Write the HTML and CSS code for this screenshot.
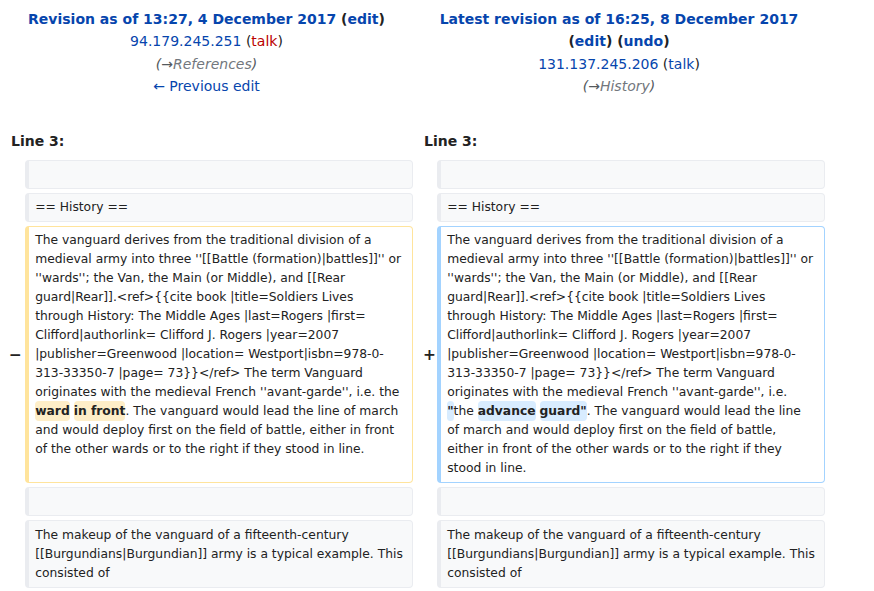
FILE: index.html
```html
<!DOCTYPE html>
<html lang="en">
<head>
<meta charset="utf-8">
<title>Diff</title>
<link rel="stylesheet" href="styles.css">
</head>
<body>
<div class="diff">
  <div class="hdr">
    <p class="title"><a href="#">Revision as of 13:27, 4 December 2017</a> <span class="paren">(<a href="#">edit</a>)</span></p>
    <p><a href="#">94.179.245.251</a> (<a href="#" class="new">talk</a>)</p>
    <p class="comment">(→<span class="autocomment">References</span>)</p>
    <p><a href="#">← Previous edit</a></p>
  </div>
  <div class="hdr">
    <p class="title"><a href="#">Latest revision as of 16:25, 8 December 2017</a> <span class="paren nowrap">(<a href="#">edit</a>) (<a href="#">undo</a>)</span></p>
    <p><a href="#">131.137.245.206</a> (<a href="#">talk</a>)</p>
    <p class="comment">(→<span class="autocomment">History</span>)</p>
  </div>

  <div class="lineno">Line 3:</div>
  <div class="lineno">Line 3:</div>

  <div class="mk"></div><div class="cell ctx"><br></div>
  <div class="mk"></div><div class="cell ctx"><br></div>

  <div class="mk"></div><div class="cell ctx">== History ==</div>
  <div class="mk"></div><div class="cell ctx">== History ==</div>

  <div class="mk">−</div><div class="cell del">The vanguard derives from the traditional division of a medieval army into three ''[[Battle (formation)|battles]]'' or ''wards''; the Van, the Main (or Middle), and [[Rear guard|Rear]].&lt;ref&gt;{{cite book |title=Soldiers Lives through History: The Middle Ages |last=Rogers |first= Clifford|authorlink= Clifford J. Rogers |year=2007 |publisher=Greenwood |location= Westport|isbn=978-0-<wbr>313-33350-7 |page= 73}}&lt;/ref&gt; The term Vanguard originates with the medieval French ''avant-garde'', i.e. the <del class="chg">ward</del> <del class="chg">in front</del>. The vanguard would lead the line of march and would deploy first on the field of battle, either in front of the other wards or to the right if they stood in line.</div>
  <div class="mk mk-add">+</div><div class="cell add">The vanguard derives from the traditional division of a medieval army into three ''[[Battle (formation)|battles]]'' or ''wards''; the Van, the Main (or Middle), and [[Rear guard|Rear]].&lt;ref&gt;{{cite book |title=Soldiers Lives through History: The Middle Ages |last=Rogers |first= Clifford|authorlink= Clifford J. Rogers |year=2007 |publisher=Greenwood |location= Westport|isbn=978-0-<wbr>313-33350-7 |page= 73}}&lt;/ref&gt; The term Vanguard originates with the medieval French ''avant-garde'', i.e. <ins class="chg">"</ins>the <ins class="chg">advance</ins> <ins class="chg">guard"</ins>. The vanguard would lead the line of march and would deploy first on the field of battle, either in front of the other wards or to the right if they stood in line.</div>

  <div class="mk"></div><div class="cell ctx"><br></div>
  <div class="mk"></div><div class="cell ctx"><br></div>

  <div class="mk"></div><div class="cell ctx">The makeup of the vanguard of a fifteenth-century [[Burgundians|Burgundian]] army is a typical example. This consisted of</div>
  <div class="mk"></div><div class="cell ctx">The makeup of the vanguard of a fifteenth-century [[Burgundians|Burgundian]] army is a typical example. This consisted of</div>
</div>
</body>
</html>
```

FILE: styles.css
```css
html, body {
  margin: 0;
  padding: 0;
  background: #fff;
}

body {
  font-family: "DejaVu Sans", "Liberation Sans", sans-serif;
  font-size: 14px;
  color: #222;
}

a {
  color: #0645ad;
  text-decoration: none;
}

a.new {
  color: #ba0000;
}

.diff {
  display: grid;
  grid-template-columns: 25px 388px 24px 388px;
  row-gap: 4px;
  padding-top: 8px;
}

.hdr {
  grid-column: span 2;
  text-align: center;
  line-height: 1.6;
}

.hdr p {
  margin: 0;
}

.title {
  font-weight: bold;
}

.paren {
  color: #222;
}

.nowrap {
  white-space: nowrap;
}

.comment {
  font-style: italic;
  color: #54595d;
}

.autocomment {
  color: #72777d;
}

.lineno {
  grid-column: span 2;
  font-weight: bold;
  line-height: 1.6;
  padding: 28px 0 4px 11px;
}

.mk {
  align-self: center;
  text-align: right;
  font-weight: bold;
  font-size: 15.4px;
  line-height: 1.2;
  padding-right: 3px;
}

.mk-add {
  padding-right: 1px;
}

.cell {
  font-size: 12.32px;
  line-height: 19px;
  white-space: pre-wrap;
  overflow-wrap: break-word;
  border: 1px solid;
  border-left-width: 4px;
  border-radius: 4px;
  padding: 4.07px 9px 4.07px 6.16px;
}

.ctx {
  background: #f8f9fa;
  border-color: #eaecf0;
}

.del {
  background: #fff;
  border-color: #ffe49c;
}

.add {
  background: #fff;
  border-color: #a3d3ff;
}

.chg {
  font-weight: bold;
  text-decoration: none;
  border-radius: 4px;
  padding: 3px 0;
}

.del .chg {
  background: #feeec8;
}

.add .chg {
  background: #d8ecff;
}
```
